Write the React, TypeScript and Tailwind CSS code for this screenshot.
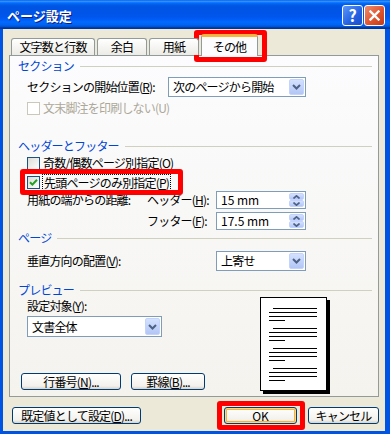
import React from "react";

const FONT = "'Noto Sans CJK JP', 'Noto Sans', sans-serif";

function Chevron() {
  return (
    <svg width="9" height="6" viewBox="0 0 9 6">
      <path d="M1 1 L4.5 4.5 L8 1" stroke="#4D6185" strokeWidth="2" fill="none" />
    </svg>
  );
}

function DropBtn() {
  return (
    <div className="w-[15px] h-full flex items-center justify-center rounded-[2px] border border-[#C3D3FD] bg-[linear-gradient(to_bottom,#D4E1FE,#B2C6F6)]">
      <Chevron />
    </div>
  );
}

function Select({ text, cls }: { text: string; cls: string }) {
  return (
    <div className={"flex border border-[#7F9DB9] bg-white p-[1px] " + cls}>
      <div className="flex-1 flex items-center pl-[3px] text-black">{text}</div>
      <DropBtn />
    </div>
  );
}

function Spin({ text }: { text: string }) {
  return (
    <div className="flex w-[90px] h-[18px] border border-[#7F9DB9] bg-white p-[1px]">
      <div className="flex-1 flex items-center pl-[3px] text-black tracking-normal">{text}</div>
      <div className="w-[15px] flex flex-col">
        <div className="flex-1 flex items-center justify-center rounded-[2px] border border-[#C3D3FD] bg-[linear-gradient(to_bottom,#D4E1FE,#B2C6F6)]">
          <svg width="7" height="4" viewBox="0 0 7 4">
            <path d="M0.5 3.5 L3.5 0.8 L6.5 3.5" stroke="#4D6185" strokeWidth="1.6" fill="none" />
          </svg>
        </div>
        <div className="flex-1 flex items-center justify-center rounded-[2px] border border-[#C3D3FD] bg-[linear-gradient(to_bottom,#D4E1FE,#B2C6F6)]">
          <svg width="7" height="4" viewBox="0 0 7 4">
            <path d="M0.5 0.5 L3.5 3.2 L6.5 0.5" stroke="#4D6185" strokeWidth="1.6" fill="none" />
          </svg>
        </div>
      </div>
    </div>
  );
}

function Check({ checked = false, disabled = false }: { checked?: boolean; disabled?: boolean }) {
  return (
    <div
      className={
        "w-[13px] h-[13px] border flex items-center justify-center shrink-0 " +
        (disabled
          ? "border-[#CAC8BB] bg-white"
          : "border-[#1C5180] bg-[linear-gradient(135deg,#DCDCD7,#FFFFFF)]")
      }
    >
      {checked && (
        <svg width="9" height="9" viewBox="0 0 9 9">
          <path d="M1 4.2 L3.4 6.6 L8 1.8" stroke="#21A121" strokeWidth="2" fill="none" />
        </svg>
      )}
    </div>
  );
}

function GroupHeader({ label }: { label: string }) {
  return (
    <div className="flex items-center h-[14px] pl-[8px] pr-[6px]">
      <span className="text-[#0046D5] leading-none">{label}</span>
      <div className="flex-1 ml-[6px] h-[1px] bg-[#D0D0BF]" />
    </div>
  );
}

function Btn({ children, cls, def = false }: { children: React.ReactNode; cls: string; def?: boolean }) {
  return (
    <div
      className={
        "flex items-center justify-center h-[17px] border border-[#003C74] rounded-[3px] bg-[linear-gradient(to_bottom,#FFFFFF,#F2F1EC_80%,#D8D2C6)] text-black " +
        (def ? "shadow-[inset_0_0_0_1px_#FBD78A,inset_0_0_0_2px_#F5B244] " : "") +
        cls
      }
    >
      {children}
    </div>
  );
}

function PagePreview() {
  const groups = [10, 30, 50, 70];
  return (
    <div className="w-[67px] h-[94px] border border-black bg-white shadow-[3px_3px_0_#000]">
      <svg width="65" height="92" viewBox="0 0 65 92">
        {groups.map((g) => (
          <g key={g} fill="#000">
            <rect x="12" y={g} width="44" height="1" />
            <rect x="8" y={g + 4} width="48" height="1" />
            <rect x="8" y={g + 8} width="48" height="1" />
            <rect x="8" y={g + 12} width="16" height="1" />
          </g>
        ))}
      </svg>
    </div>
  );
}

export default function App() {
  return (
    <div
      className="w-[390px] h-[434px] relative flex flex-col overflow-hidden bg-[#0054E3] text-[12px] leading-none tracking-[-0.8px]"
      style={{ fontFamily: FONT }}
    >
      {/* Title bar */}
      <div className="h-[29px] flex items-center pl-[7px] pr-[5px] bg-[linear-gradient(to_bottom,#0058EE_0%,#3593FF_4%,#288EFF_6%,#127DFF_8%,#036FFC_10%,#0262EE_14%,#0057E5_20%,#0054E3_24%,#0055EB_56%,#005BF5_66%,#026AFE_76%,#0062EF_86%,#0052D6_92%,#0040AB_94%,#003092_100%)]">
        <span className="text-white font-bold text-[13px] pt-[2px] tracking-normal [text-shadow:1px_1px_0_#0A1E8A]">
          ページ設定
        </span>
        <div className="ml-auto flex gap-[1px] pt-[1px]">
          <div className="w-[21px] h-[21px] rounded-[3px] border border-white bg-[linear-gradient(135deg,#5C97FA,#2360E0_60%,#1B4FCB)] flex items-center justify-center text-white font-bold text-[16px] tracking-normal">
            ?
          </div>
          <div className="w-[21px] h-[21px] rounded-[3px] border border-white bg-[linear-gradient(135deg,#EE8C6C,#E0552F_55%,#C23B17)] flex items-center justify-center">
            <svg width="11" height="11" viewBox="0 0 11 11">
              <path d="M1.5 1.5 L9.5 9.5 M9.5 1.5 L1.5 9.5" stroke="#fff" strokeWidth="2.4" strokeLinecap="square" />
            </svg>
          </div>
        </div>
      </div>

      {/* Body */}
      <div className="flex-1 ml-[3px] mr-[5px] mb-[3px] bg-[#ECE9D8] flex flex-col">
        {/* Tabs */}
        <div className="flex items-end h-[21px] mt-[5px] ml-[8px] gap-[2px] relative z-10">
          <div className="w-[84px] h-[17px] flex items-center justify-center border border-b-0 border-[#919B9C] rounded-t-[3px] bg-[linear-gradient(to_bottom,#FFFFFF,#ECEBE6)] text-black">
            文字数と行数
          </div>
          <div className="w-[50px] h-[17px] flex items-center justify-center border border-b-0 border-[#919B9C] rounded-t-[3px] bg-[linear-gradient(to_bottom,#FFFFFF,#ECEBE6)] text-black">
            余白
          </div>
          <div className="w-[50px] h-[17px] flex items-center justify-center border border-b-0 border-[#919B9C] rounded-t-[3px] bg-[linear-gradient(to_bottom,#FFFFFF,#ECEBE6)] text-black">
            用紙
          </div>
          <div className="w-[57px] h-[22px] -mb-[1px] flex items-center justify-center border border-b-0 border-[#919B9C] border-t-[3px] border-t-[#F7B43E] rounded-t-[3px] bg-[#FCFCFE] text-black">
            その他
          </div>
        </div>

        {/* Panel */}
        <div className="ml-[6px] mr-[6px] h-[342px] border border-[#919B9C] bg-[linear-gradient(to_bottom,#FCFCFE,#F4F3EE)] flex flex-col">
          <div className="mt-[3px]">
            <GroupHeader label="セクション" />
          </div>
          <div className="mt-[4px] h-[20px] flex items-center pl-[17px]">
            <span className="w-[141px] text-black">
              セクションの開始位置(<u>R</u>):
            </span>
            <Select text="次のページから開始" cls="w-[138px] h-[20px]" />
          </div>
          <div className="mt-[4px] h-[14px] flex items-center pl-[17px] gap-[3px]">
            <Check disabled />
            <span className="text-[#ACA899]">文末脚注を印刷しない(U)</span>
          </div>

          <div className="mt-[24px]">
            <GroupHeader label="ヘッダーとフッター" />
          </div>
          <div className="mt-[3px] h-[14px] flex items-center pl-[17px] gap-[3px]">
            <Check />
            <span className="text-black">
              奇数/偶数ページ別指定(<u>O</u>)
            </span>
          </div>
          <div className="mt-[4px] h-[17px] flex items-center pl-[17px] gap-[2px]">
            <Check checked />
            <span className="h-[17px] flex items-center px-[1px] border border-dotted border-black text-black">
              先頭ページのみ別指定(<u>P</u>)
            </span>
          </div>
          <div className="h-[18px] flex items-center pl-[17px]">
            <span className="w-[120px] text-black">用紙の端からの距離:</span>
            <span className="w-[69px] text-black">
              ヘッダー(<u>H</u>):
            </span>
            <Spin text="15 mm" />
          </div>
          <div className="mt-[3px] h-[18px] flex items-center pl-[137px]">
            <span className="w-[69px] text-black">
              フッター(<u>F</u>):
            </span>
            <Spin text="17.5 mm" />
          </div>

          <div className="mt-[1px]">
            <GroupHeader label="ページ" />
          </div>
          <div className="mt-[6px] h-[20px] flex items-center pl-[17px]">
            <span className="w-[189px] text-black">
              垂直方向の配置(<u>V</u>):
            </span>
            <Select text="上寄せ" cls="w-[90px] h-[20px]" />
          </div>

          <div className="mt-[12px]">
            <GroupHeader label="プレビュー" />
          </div>
          <div className="flex pl-[11px]">
            <div className="w-[239px] flex flex-col">
              <div className="mt-[2px] h-[14px] flex items-center pl-[6px] text-black">
                設定対象(<u>Y</u>):
              </div>
              <div className="mt-[3px] pl-[6px]">
                <Select text="文書全体" cls="w-[135px] h-[21px]" />
              </div>
              <div className="mt-[36px] flex gap-[10px]">
                <Btn cls="w-[100px]">
                  行番号(<u>N</u>)...
                </Btn>
                <Btn cls="w-[74px]">
                  罫線(<u>B</u>)...
                </Btn>
              </div>
            </div>
            <PagePreview />
          </div>
        </div>

        {/* Bottom buttons */}
        <div className="mt-[10px] flex pl-[9px] pr-[6px]">
          <Btn cls="w-[129px]">
            既定値として設定(<u>D</u>)...
          </Btn>
          <Btn cls="w-[73px] ml-auto tracking-normal" def>
            OK
          </Btn>
          <Btn cls="w-[71px] ml-[11px]">キャンセル</Btn>
        </div>
      </div>

      {/* Red annotation boxes */}
      <div className="absolute left-[194px] top-[30px] w-[73px] h-[32px] border-[5px] border-[#FF0000] rounded-[3px]" />
      <div className="absolute left-[20px] top-[169px] w-[163px] h-[26px] border-[5px] border-[#FF0000] rounded-[3px]" />
      <div className="absolute left-[217px] top-[401px] w-[88px] h-[29px] border-[5px] border-[#FF0000] rounded-[3px]" />
    </div>
  );
}
